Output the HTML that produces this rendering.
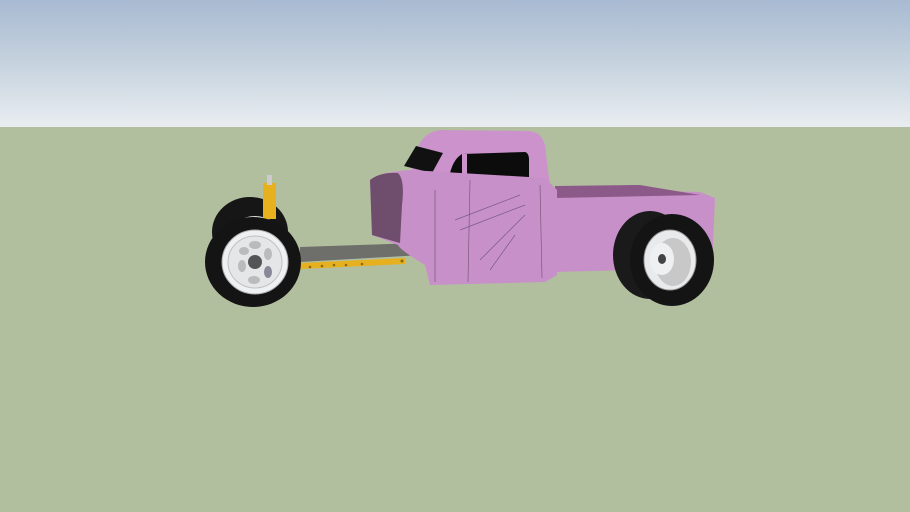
<!DOCTYPE html>
<html><head><style>html,body{margin:0;padding:0;width:910px;height:512px;overflow:hidden}</style></head>
<body>
<svg width="910" height="512" viewBox="0 0 910 512" xmlns="http://www.w3.org/2000/svg">
<defs>
<linearGradient id="sky" x1="0" y1="0" x2="0" y2="1">
<stop offset="0" stop-color="#a8bad2"/><stop offset="0.5" stop-color="#c6d3de"/><stop offset="1" stop-color="#e9edf1"/>
</linearGradient>
</defs>
<rect width="910" height="127" fill="url(#sky)"/>
<rect y="127" width="910" height="385" fill="#b2bf9f"/>
<!-- frame -->
<polygon points="300,247 420,243 422,255 300,262" fill="#6e6e6a"/>
<polygon points="300,263 405,258 405,264 300,269" fill="#e6b01e"/>
<g fill="#8a6a10"><circle cx="310" cy="267" r="1.3"/><circle cx="322" cy="266" r="1.3"/><circle cx="334" cy="265" r="1.3"/><circle cx="346" cy="265" r="1.3"/><circle cx="362" cy="264" r="1.3"/><circle cx="402" cy="261" r="1.5"/></g>
<!-- front back tire -->
<ellipse cx="250" cy="232" rx="38" ry="35" fill="#161616"/>
<ellipse cx="255" cy="236" rx="25" ry="20" fill="#ddd"/>
<!-- yellow spindle -->
<rect x="263" y="183" width="13" height="36" fill="#e6b01e"/>
<rect x="267" y="175" width="5" height="10" fill="#ccc"/>
<!-- front tire -->
<ellipse cx="253" cy="262" rx="48" ry="45" fill="#141414"/>
<ellipse cx="255" cy="262" rx="33" ry="32" fill="#eef0f2" stroke="#aaa"/>
<ellipse cx="255" cy="262" rx="27" ry="26" fill="#e4e6e8" stroke="#c0c0c0"/>
<ellipse cx="255" cy="262" rx="7" ry="7" fill="#555"/>
<ellipse cx="255" cy="245" rx="6" ry="4" fill="#bbb"/><ellipse cx="268" cy="254" rx="4" ry="6" fill="#bbb"/>
<ellipse cx="268" cy="272" rx="4" ry="6" fill="#889"/><ellipse cx="254" cy="280" rx="6" ry="4" fill="#bbb"/>
<ellipse cx="242" cy="266" rx="4" ry="6" fill="#bbb"/><ellipse cx="244" cy="251" rx="5" ry="4" fill="#bbb"/>
<!-- bed -->
<polygon points="555,188 700,192 715,198 712,268 555,272" fill="#c890c8"/>
<polygon points="555,186 640,185 700,195 555,198" fill="#8c5a88"/>
<!-- cab -->
<path d="M415,160 Q418,133 440,130 L530,131 Q546,133 546,155 L550,185 L405,190 Z" fill="#cc92cc"/>
<polygon points="404,166 416,146 443,153 432,173" fill="#111"/>
<path d="M449,178 Q452,160 462,154 L525,152 Q529,153 529,160 L529,178 Z" fill="#0c0c0c"/>
<rect x="462" y="154" width="5" height="25" fill="#cc92cc"/>
<!-- body -->
<path d="M370,180 Q380,172 410,170 L545,178 L557,190 L557,275 L545,282 L430,285 L425,265 Q400,250 398,245 L372,235 Z" fill="#c890c8"/>
<path d="M370,180 Q380,172 398,173 Q405,180 402,205 L400,243 L372,235 Z" fill="#6e4e6c"/>
<path d="M435,190 L435,282 M540,185 L542,278 M470,180 L468,282" stroke="#7a5a7a" stroke-width="0.7" fill="none"/>
<path d="M455,220 L520,195 M460,230 L525,205 M480,260 L525,215 M490,270 L515,235" stroke="#7a5a8a" stroke-width="0.7"/>
<!-- rear tire -->
<ellipse cx="650" cy="255" rx="37" ry="44" fill="#1a1a1a"/>
<ellipse cx="672" cy="260" rx="42" ry="46" fill="#141414"/>
<ellipse cx="670" cy="260" rx="26" ry="30" fill="#e8eaec" stroke="#999"/>
<ellipse cx="673" cy="262" rx="18" ry="24" fill="#c8c8c8"/>
<ellipse cx="662" cy="259" rx="12" ry="16" fill="#eef0f2"/>
<ellipse cx="662" cy="259" rx="4" ry="5" fill="#444"/>
</svg>
</body></html>
